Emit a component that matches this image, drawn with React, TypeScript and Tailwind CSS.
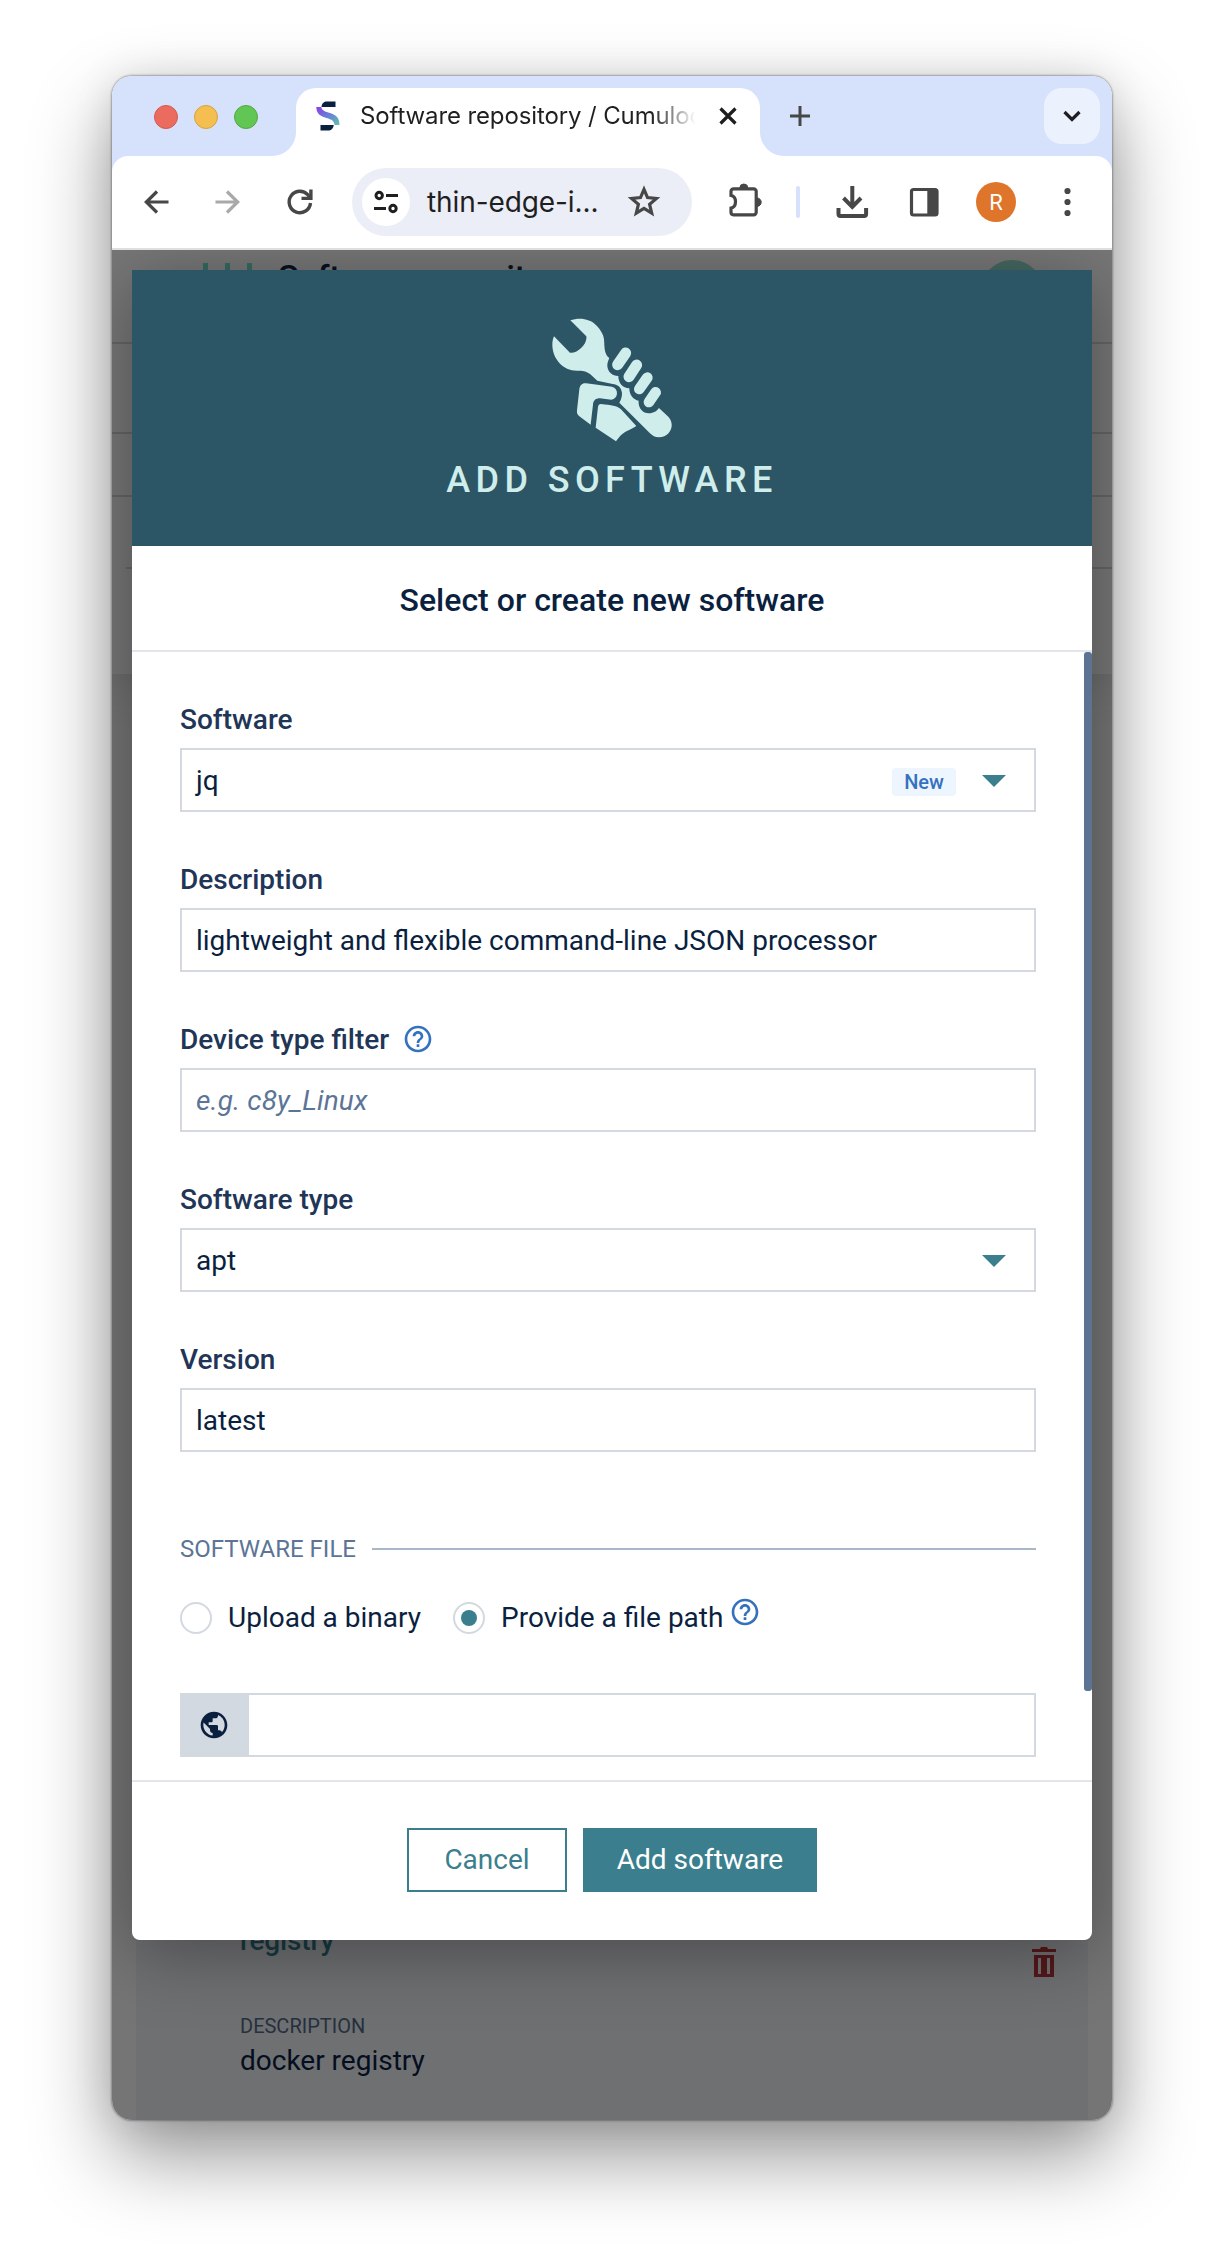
import React from "react";
import { MdHelpOutline, MdPublic } from "react-icons/md";

function TrafficLights() {
  return (
    <div className="flex h-[82px] items-center gap-4 pl-[42px]">
      <span className="size-6 rounded-full border border-[#d35a4f] bg-[#ec6b5f]" />
      <span className="size-6 rounded-full border border-[#d6a243] bg-[#f4bf50]" />
      <span className="size-6 rounded-full border border-[#52a844] bg-[#62c655]" />
    </div>
  );
}

function Favicon() {
  return (
    <svg width="24" height="30" viewBox="0 0 24 30" className="shrink-0">
      <defs>
        <linearGradient id="wave" x1="0" y1="0" x2="1" y2="1">
          <stop offset="0" stopColor="#8a3ee8" />
          <stop offset="0.5" stopColor="#6a80d8" />
          <stop offset="1" stopColor="#5fc3ab" />
        </linearGradient>
      </defs>
      <path d="M5.500 6C5.500 2.500 8 .5 11 .5h8.500v5.500z" fill="#0b1f3f" />
      <path d="M.3 6h5c.3 3.500 4 4.600 8.700 6 6 1.800 9.700 5 9.500 12h-5c0-4-3-5.500-8-7C4.500 15.500.3 12.500.3 6z" fill="url(#wave)" />
      <path d="M4.500 24h13.200c-.2 3.500-2.500 5.500-5.700 5.500H4.500z" fill="#0b1f3f" />
    </svg>
  );
}

function TabStrip() {
  return (
    <div className="flex h-20 bg-[#d6e1fb]">
      <div className="w-40 shrink-0">
        <TrafficLights />
      </div>
      <div className="flex w-6 shrink-0 items-end bg-white">
        <div className="h-20 w-6 rounded-br-[24px] bg-[#d6e1fb]" />
      </div>
      <div className="mt-3 flex h-[68px] w-[464px] shrink-0 items-start rounded-t-[20px] bg-white pt-[13px] pl-5 shadow-[0_-1px_0_#d6e1fb]">
        <Favicon />
        <div className="ml-5 h-[30px] w-[339px] overflow-hidden whitespace-nowrap bg-gradient-to-r from-[#1f1f1f] from-[86%] to-transparent to-[99%] bg-clip-text font-['Inter'] text-[24px] leading-[30px] tracking-[-0.12px] text-transparent">
          Software repository / Cumulocity
        </div>
        <svg width="18" height="18" viewBox="0 0 18 18" className="mt-[6px] ml-5" stroke="#1f1f1f" strokeWidth="3.200">
          <path d="M1.500 1.500l15 15M16.500 1.500l-15 15" />
        </svg>
      </div>
      <div className="w-6 shrink-0 bg-white">
        <div className="h-20 w-6 rounded-bl-[24px] bg-[#d6e1fb]" />
      </div>
      <svg width="20" height="20" viewBox="0 0 20 20" className="mt-[30px] ml-[6px]" stroke="#474747" strokeWidth="3">
        <path d="M10 0v20M0 10h20" />
      </svg>
      <div className="mt-3 mr-3 ml-auto flex size-14 items-center justify-center rounded-[18px] bg-[#ebf2fd]">
        <svg width="18" height="12" viewBox="0 0 18 12" fill="none" stroke="#1f1f1f" strokeWidth="3.200">
          <path d="M1.500 2l7.500 7.500L16.500 2" />
        </svg>
      </div>
    </div>
  );
}

function Toolbar() {
  return (
    <div className="h-[92px] bg-[#d6e1fb]">
      <div className="flex h-full items-center rounded-t-[16px] bg-white pl-6">
        <svg width="40" height="40" viewBox="0 0 40 40" fill="none" stroke="#474747" strokeWidth="3.200">
          <path d="M32.500 20H10M21 9.500L10.300 20 21 30.500" />
        </svg>
        <svg width="40" height="40" viewBox="0 0 40 40" className="ml-[31px]" fill="none" stroke="#a9a9a9" strokeWidth="3.200">
          <path d="M8.500 20H31M20 9.500L30.700 20 20 30.500" />
        </svg>
        <svg width="40" height="40" viewBox="0 0 40 40" className="ml-[33px]" fill="none" stroke="#474747" strokeWidth="3.400">
          <path d="M30.500 21a10.700 10.700 0 1 1-2.800-8.300l3 3.300" />
          <path d="M30.900 7.500v8.900H21.500" />
        </svg>
        <div className="ml-8 flex h-[68px] w-[340px] items-center rounded-full bg-[#ebeef7] pl-[10px]">
          <span className="flex size-12 items-center justify-center rounded-full bg-white">
            <svg width="24" height="24" viewBox="0 0 24 24" fill="none" stroke="#1f1f1f" strokeWidth="3">
              <circle cx="5.200" cy="5.500" r="3.200" />
              <circle cx="19" cy="18.500" r="3.200" />
              <path d="M12 5.500h12M0 18.500h12" />
            </svg>
          </span>
          <span className="ml-[17px] w-[171px] whitespace-nowrap font-['Inter'] text-[28px] leading-8 tracking-[-0.1px] text-[#1f1f1f]">thin-edge-i...</span>
          <svg width="40" height="40" viewBox="0 0 40 40" className="ml-[26px]" fill="none" stroke="#474747" strokeWidth="3.200">
            <path d="M20 7.300l3.500 8.300 8.900.8-6.800 5.900 2.100 8.800-7.700-4.700-7.700 4.700 2.100-8.800-6.800-5.900 8.900-.8z" />
          </svg>
        </div>
        <svg width="40" height="40" viewBox="0 0 40 40" className="ml-[34px]" fill="none" stroke="#474747" strokeWidth="3.200">
          <path d="M7.500 6.800h20.200a2.500 2.500 0 0 1 2.500 2.500v21a2.500 2.500 0 0 1-2.500 2.500H7.500a2.500 2.500 0 0 1-2.500-2.500V26c6-1 6-11.500 0-12.500V9.300a2.500 2.500 0 0 1 2.500-2.500z" />
          <path d="M13.800 6a4 4 0 0 1 8 0zM31 16a4.200 4.200 0 0 1 0 8.400z" fill="#474747" stroke="#474747" strokeWidth="1" />
        </svg>
        <span className="ml-[30px] h-8 w-1 rounded-full bg-[#d6e1fb]" />
        <svg width="40" height="40" viewBox="0 0 40 40" className="ml-8" fill="none" stroke="#474747" strokeWidth="4">
          <path d="M20.300 4v20M11.500 16l8.800 8.800L29 16M6.500 26v6a2 2 0 0 0 2 2h23.600a2 2 0 0 0 2-2v-6" />
        </svg>
        <svg width="40" height="40" viewBox="0 0 40 40" className="ml-8" fill="none" stroke="#474747" strokeWidth="3.200">
          <rect x="7.500" y="7.500" width="25.500" height="25.500" rx="2" />
          <path d="M23.300 7h8.400a2 2 0 0 1 2 2v22a2 2 0 0 1-2 2h-8.400z" fill="#474747" stroke="none" />
        </svg>
        <span className="ml-8 flex size-10 items-center justify-center rounded-full bg-[#df742b] font-['Roboto'] text-[22px] text-white">R</span>
        <svg width="40" height="40" viewBox="0 0 40 40" className="ml-[31px]" fill="#474747">
          <circle cx="20.500" cy="9" r="3.100" />
          <circle cx="20.500" cy="20" r="3.100" />
          <circle cx="20.500" cy="31" r="3.100" />
        </svg>
      </div>
    </div>
  );
}

/* Dimmed application page that sits behind the dialog. */
function PageBehind() {
  return (
    <div className="absolute inset-0 flex flex-col overflow-hidden bg-[#757575]">
      <div className="h-[424px] shrink-0 bg-[#777777] shadow-[0_0_44px_rgba(60,66,72,0.4)]">
        <div className="flex h-[94px] items-start border-b-2 border-[#666] pl-[91px]">
          <div className="mt-[13px] flex h-8 gap-[17px]">
            <span className="w-[5px] bg-[#356a62]" />
            <span className="w-[5px] bg-[#356a62]" />
            <span className="w-[5px] bg-[#356a62]" />
          </div>
          <span className="mt-[7px] ml-[26px] text-[34px] leading-[40px] font-medium tracking-[-0.2px] text-[#06101f]">Software repository</span>
          <span className="mt-[10px] mr-[69px] ml-auto size-[62px] rounded-full bg-[#446860]" />
        </div>
        <div className="h-[90px] border-b-2 border-[#656565]" />
        <div className="h-[63px] border-b-2 border-[#656565]" />
        <div className="ml-[14px] h-[72px] border-b-2 border-[#656565]" />
      </div>
      <div className="mx-6 flex flex-1 flex-col justify-end bg-[#6f7072] pr-8 pb-[43px] pl-[104px]">
        <div className="flex items-start justify-between">
          <span className="mt-[2px] text-[28px] leading-8 font-medium tracking-[-0.15px] text-[#173a42]">registry</span>
          <svg width="24" height="30" viewBox="0 0 24 30" className="mt-6" fill="#55181b">
            <path fillRule="evenodd" d="M0 2h8l1-2h6l1 2h8v3H0zM2 8h20v22H2zM6 11v16h3V11zM15 11v16h3V11z" />
          </svg>
        </div>
        <span className="mt-[33px] text-[20px] leading-8 text-[#27303f]">DESCRIPTION</span>
        <span className="mt-[3px] text-[28px] leading-8 text-[#040e1e]">docker registry</span>
      </div>
    </div>
  );
}

function WrenchInHand() {
  return (
    <svg width="123.300" height="126.700" viewBox="390 80 370 380" fill="#cfedeb">
      <path d="M451 90C475 82 508 82 531 107C550 128 553 142 553 163C554 183 557 194 568 203C564 212 562 219 562 227C564 246 577 257 595 257C595 278 608 293 628 294C628 315 641 329 656 331C654 352 668 369 686 369C702 368 711 362 717 353L745 379C767 402 752 441 717 441C705 441 697 436 690 429L598 337C605 325 606 317 606 308C604 290 592 282 578 281L532 271L511 252C499 242 487 241 472 241C430 242 397 205 397 163C397 152 399 145 402 138L450 187C473 190 503 160 499 138Z" />
      <g stroke="#cfedeb" strokeLinecap="round">
        <path strokeWidth="33" d="M617 188L593 223M650 224L627 259" />
        <path strokeWidth="32" d="M682 262L658 296M707 306L687 335" />
      </g>
      <path d="M499 279L576 289C597 294 596 325 574 328L540 324C527 324 520 330 519 343L512 403L478 378C472 373 470 370 471 360L478 297C479 285 487 277 499 279Z" />
      <path d="M543 341Q535 341 534 350L527 412L588 453L598 440C610 425 630 419 649 407L603 357C590 345 575 345 543 341Z" />
    </svg>
  );
}

function Caret() {
  return (
    <svg width="24" height="12" viewBox="0 0 24 12" fill="#3b7f8e" className="mr-7">
      <path d="M0 0h24L12 12z" />
    </svg>
  );
}

function Field({ label, help, children }: { label: string; help?: boolean; children: React.ReactNode }) {
  return (
    <div className="mb-12">
      <div className="mb-2 flex h-10 items-center text-[28px] font-medium text-[#213557]">
        {label}
        {help && <MdHelpOutline className="mb-[2px] ml-[13px] size-8 text-[#3572bd]" />}
      </div>
      <div className="flex h-16 items-center border-2 border-[#d3d9e0] pt-[2px] pl-[14px] text-[28px] text-[#0b1f3f]">{children}</div>
    </div>
  );
}

function SoftwareFile() {
  return (
    <div className="mt-[81px]">
      <div className="flex h-8 items-center gap-4 text-[24px] text-[#5c7596]">
        SOFTWARE FILE
        <span className="h-[2px] flex-1 bg-[#a9b7c9]" />
      </div>
      <div className="mt-[37px] flex h-8 items-center text-[28px] text-[#0b1f3f]">
        <span className="size-8 rounded-full border-2 border-[#d3d9e0]" />
        <span className="ml-4 w-[194px] whitespace-nowrap">Upload a binary</span>
        <span className="ml-[31px] flex size-8 items-center justify-center rounded-full border-2 border-[#d3d9e0]">
          <span className="size-4 rounded-full bg-[#3b7f8e]" />
        </span>
        <span className="ml-4">Provide a file path</span>
        <MdHelpOutline className="mb-[13px] ml-[6px] size-8 text-[#3572bd]" />
      </div>
      <div className="mt-[59px] flex h-16 border-2 border-[#d3d9e0]">
        <span className="flex w-[67px] items-center justify-center bg-[#d3d9e0] pr-1">
          <MdPublic className="size-8 text-[#0b1f3f]" />
        </span>
      </div>
    </div>
  );
}

function Dialog() {
  return (
    <div className="relative mx-auto h-[1670px] w-[960px] overflow-hidden rounded-b-[8px] bg-white">
      <div className="flex h-[276px] flex-col items-center bg-[#2c5566] pt-[47px]">
        <WrenchInHand />
        <div className="mt-4 text-[36px] leading-10 font-medium tracking-[5.400px] text-[#cfedeb]">ADD SOFTWARE</div>
      </div>
      <div className="flex h-[106px] items-center justify-center border-b-2 border-[#e2e6ea] pt-1 text-[32px] font-medium text-[#0b1f3f]">
        Select or create new software
      </div>
      <div className="flex h-[1128px]">
        <div className="flex-1 pt-12 pr-12 pl-12">
          <Field label="Software">
            jq
            <span className="mt-[2px] mr-[26px] ml-auto flex h-7 w-16 items-center justify-center rounded bg-[#edf5ff] text-[20px] font-medium text-[#3572bd]">New</span>
            <Caret />
          </Field>
          <Field label="Description">lightweight and flexible command-line JSON processor</Field>
          <Field label="Device type filter" help>
            <span className="tracking-[0.1px] text-[#5c7596] italic">e.g. c8y_Linux</span>
          </Field>
          <Field label="Software type">
            <span className="mr-auto">apt</span>
            <Caret />
          </Field>
          <Field label="Version">latest</Field>
          <SoftwareFile />
        </div>
        <div className="h-[1039px] w-2 rounded-[3px] bg-[#5c7394]" />
      </div>
      <div className="flex h-40 items-start justify-center gap-4 border-t-2 border-[#e2e6ea] pt-[46px] text-[28px]">
        <button className="h-16 w-40 border-2 border-[#3b7f8e] text-[#3b7f8e]">Cancel</button>
        <button className="h-16 w-[234px] bg-[#3b7f8e] text-white">Add software</button>
      </div>
    </div>
  );
}

export default function App() {
  return (
    <div className="h-[2268px] w-[1224px] overflow-hidden bg-white pt-[76px] font-['Roboto',sans-serif]">
      <div className="ml-28 h-[2044px] w-[1000px] rounded-[20px] shadow-[0_36px_80px_rgba(0,0,0,0.42),0_0_40px_rgba(0,0,0,0.1),0_0_2px_1px_rgba(0,0,0,0.3)]">
        <div className="flex h-full flex-col overflow-hidden rounded-[20px]">
          <TabStrip />
          <Toolbar />
          <div className="h-[2px] bg-[#dfdfdf]" />
          <div className="relative flex-1 overflow-hidden pt-5">
            <PageBehind />
            <div className="relative mx-5 h-[1670px] rounded-b-[8px] shadow-[0_12px_70px_rgba(0,0,0,0.35)]">
              <Dialog />
            </div>
          </div>
        </div>
      </div>
    </div>
  );
}
